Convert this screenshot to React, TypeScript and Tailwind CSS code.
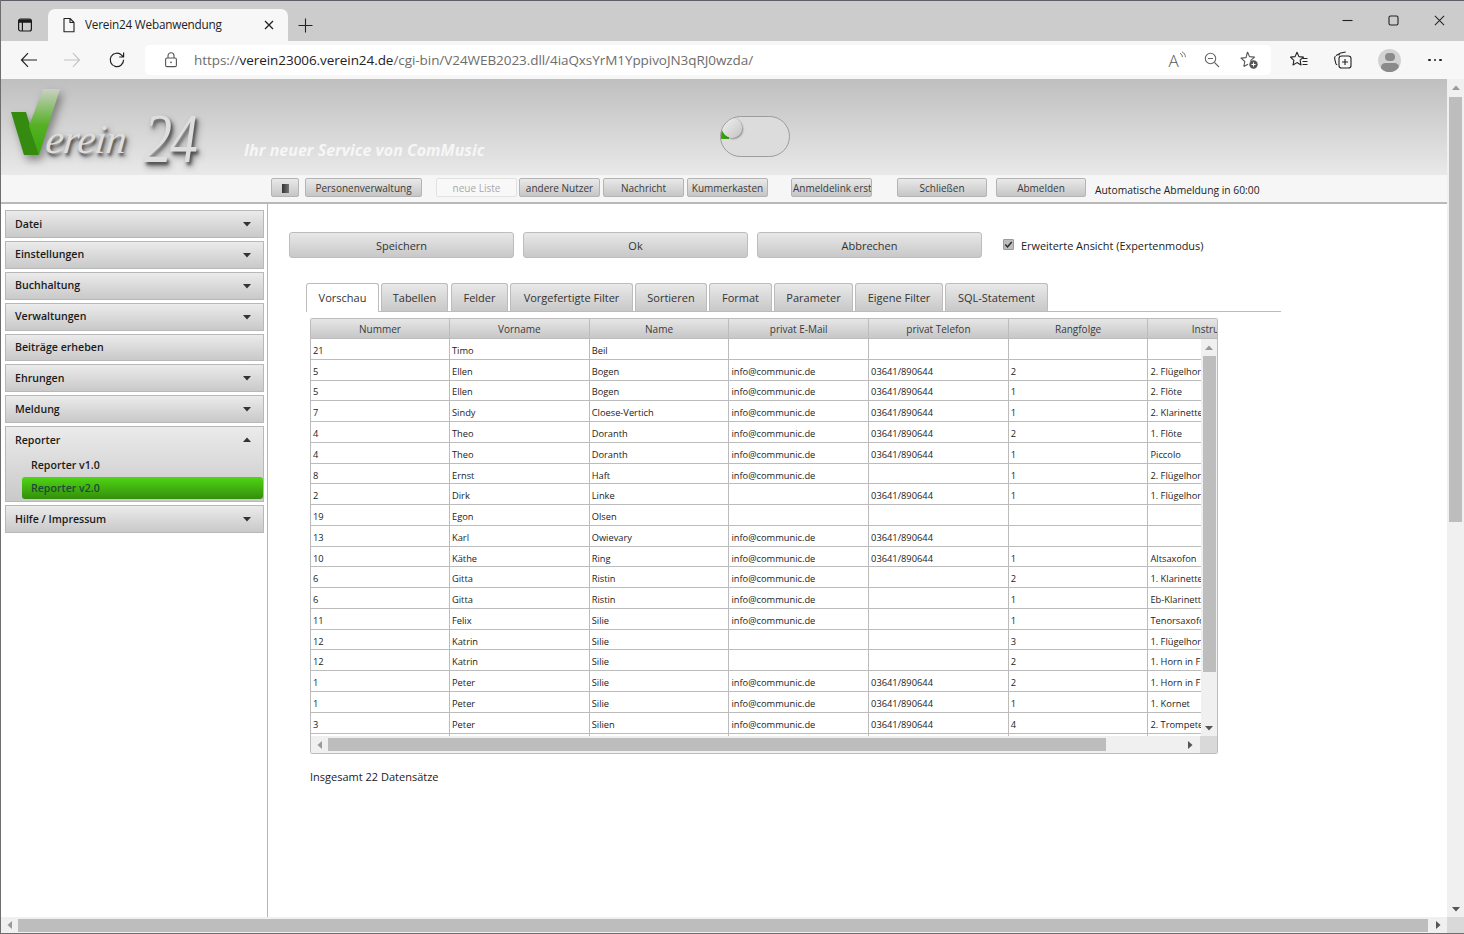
import React from "react";

const info = "info@communic.de";
const tel = "03641/890644";
const rows: string[][] = [
  ["21", "Timo", "Beil", "", "", "", ""],
  ["5", "Ellen", "Bogen", info, tel, "2", "2. Flügelhorn"],
  ["5", "Ellen", "Bogen", info, tel, "1", "2. Flöte"],
  ["7", "Sindy", "Cloese-Vertich", info, tel, "1", "2. Klarinette"],
  ["4", "Theo", "Doranth", info, tel, "2", "1. Flöte"],
  ["4", "Theo", "Doranth", info, tel, "1", "Piccolo"],
  ["8", "Ernst", "Haft", info, "", "1", "2. Flügelhorn"],
  ["2", "Dirk", "Linke", "", tel, "1", "1. Flügelhorn"],
  ["19", "Egon", "Olsen", "", "", "", ""],
  ["13", "Karl", "Owievary", info, tel, "", ""],
  ["10", "Käthe", "Ring", info, tel, "1", "Altsaxofon"],
  ["6", "Gitta", "Ristin", info, "", "2", "1. Klarinette"],
  ["6", "Gitta", "Ristin", info, "", "1", "Eb-Klarinette"],
  ["11", "Felix", "Silie", info, "", "1", "Tenorsaxofon"],
  ["12", "Katrin", "Silie", "", "", "3", "1. Flügelhorn"],
  ["12", "Katrin", "Silie", "", "", "2", "1. Horn in F"],
  ["1", "Peter", "Silie", info, tel, "2", "1. Horn in F"],
  ["1", "Peter", "Silie", info, tel, "1", "1. Kornet"],
  ["3", "Peter", "Silien", info, tel, "4", "2. Trompete"],
  ["", "", "", "", "", "", ""],
];
const heads = ["Nummer", "Vorname", "Name", "privat E-Mail", "privat Telefon", "Rangfolge", "Instrument"];

const Tri = ({ dir, color = "#555", size = 8 }: { dir: "up" | "down" | "left" | "right"; color?: string; size?: number }) => {
  const pts = { up: "4,1.5 8,6 0,6", down: "0,2 8,2 4,6.5", left: "6,0 6,8 1.5,4", right: "2,0 2,8 6.5,4" }[dir];
  return (
    <svg width={size} height={size} viewBox="0 0 8 8" className="block shrink-0">
      <polygon points={pts} fill={color} />
    </svg>
  );
};

const btn = "flex items-center justify-center h-[19px] pt-[1px] rounded-[2px] border border-[#b4b4b4] bg-gradient-to-b from-[#e9e9e9] to-[#c6c6c6] text-[10px] text-[#3a3a3a] overflow-hidden whitespace-nowrap shrink-0";
const big = "flex items-center justify-center w-[225px] h-[26px] pt-[2px] rounded-[3px] border border-[#bdbdbd] bg-gradient-to-b from-[#e8e8e8] to-[#c8c8c8] text-[11px] text-[#333] shrink-0";

const Side = ({ label, arrow = true }: { label: string; arrow?: boolean }) => (
  <div className="flex items-center justify-between h-[27.9px] pl-[9px] pr-[12px] border border-[#b8b8b8] bg-gradient-to-b from-[#ebebeb] to-[#c9c9c9] text-[#1a1a1a] text-[10.6px] font-semibold shrink-0">
    <span className="pt-[1px]">{label}</span>
    {arrow && <Tri dir="down" color="#333" />}
  </div>
);

const tabs: [string, number, number][] = [
  ["Tabellen", 67, 2],
  ["Felder", 57, 3],
  ["Vorgefertigte Filter", 123, 2],
  ["Sortieren", 72, 2],
  ["Format", 63, 2],
  ["Parameter", 79, 2],
  ["Eigene Filter", 88, 2],
  ["SQL-Statement", 103, 2],
];

export default function App() {
  return (
    <div className="w-[1464px] h-[934px] flex flex-col overflow-hidden bg-white font-['Open_Sans',sans-serif] border-l border-b border-[#6e6e6e]">
      {/* Browser tab strip */}
      <div className="h-[41px] shrink-0 flex items-end bg-[#cccccc] border-t border-[#5c6066]">
        <div className="w-[47px] h-[31px] flex items-center justify-center mb-[1px]">
          <svg width="16" height="16" viewBox="0 0 16 16" fill="none" stroke="#1a1a1a" strokeWidth="1.2">
            <rect x="1.6" y="2" width="12.8" height="12" rx="2" />
            <path d="M1.6 5.2h12.8M5.4 5.2V14" />
            <rect x="2" y="2.4" width="12" height="2.6" fill="#1a1a1a" stroke="none" />
          </svg>
        </div>
        <div className="w-[240px] h-[32px] flex items-center rounded-t-[7px] bg-[#f7f7f7] pl-[13px] pr-[14px]">
          <svg width="16" height="16" viewBox="0 0 16 16" fill="none" stroke="#222" strokeWidth="1.1" className="shrink-0">
            <path d="M3 1.5h6l4 4v9.2H3zM9 1.5v4h4" strokeLinejoin="round" />
          </svg>
          <span className="ml-[8px] text-[11.75px] text-[#222] whitespace-nowrap tracking-[-0.2px]">Verein24 Webanwendung</span>
          <svg width="10" height="10" viewBox="0 0 10 10" stroke="#222" strokeWidth="1.3" className="ml-auto shrink-0">
            <path d="M1 1l8 8M9 1l-8 8" />
          </svg>
        </div>
        <div className="w-[34px] h-[32px] flex items-center justify-center">
          <svg width="15" height="15" viewBox="0 0 15 15" stroke="#222" strokeWidth="1.1"><path d="M7.5 0.5v14M0.5 7.5h14" /></svg>
        </div>
        <div className="flex-1" />
        <div className="flex items-center h-[40px] pb-[2px] pr-[19px]">
          <svg width="11" height="11" viewBox="0 0 11 11" stroke="#222" strokeWidth="1.1"><path d="M0.5 5.5h10" /></svg>
          <svg width="11" height="11" viewBox="0 0 11 11" fill="none" stroke="#222" strokeWidth="1.1" className="ml-[35px]"><rect x="1" y="1" width="9" height="9" rx="1.5" /></svg>
          <svg width="11" height="11" viewBox="0 0 12 12" stroke="#222" strokeWidth="1.1" className="ml-[35px]"><path d="M1 1l10 10M11 1L1 11" /></svg>
        </div>
      </div>

      {/* Browser toolbar */}
      <div className="h-[38px] shrink-0 flex items-center bg-[#f7f7f7]">
        <div className="w-[144px] flex items-center shrink-0">
          <svg width="18" height="18" viewBox="0 0 18 18" fill="none" stroke="#222" strokeWidth="1.2" className="ml-[19px]"><path d="M17 9H1.5M8 2.2L1.5 9 8 15.8" /></svg>
          <svg width="18" height="18" viewBox="0 0 18 18" fill="none" stroke="#c4c4c4" strokeWidth="1.2" className="ml-[25px]"><path d="M1 9h15.5M10 2.2L16.5 9 10 15.8" /></svg>
          <svg width="18" height="18" viewBox="0 0 18 18" fill="none" stroke="#222" strokeWidth="1.2" className="ml-[27px]"><path d="M15.6 8.8a6.7 6.7 0 1 1-1.9-4.6L15.6 6M15.6 1.6V6h-4.4" /></svg>
        </div>
        <div className="w-[1126px] h-[30px] flex items-center rounded-[5px] bg-white shrink-0">
          <svg width="16" height="16" viewBox="0 0 16 16" fill="none" stroke="#555" strokeWidth="1.1" className="ml-[18px] shrink-0">
            <rect x="2.6" y="6" width="10.8" height="8.6" rx="1.4" />
            <path d="M5 6V3.8a3 3 0 0 1 6 0V6" />
            <circle cx="8" cy="10.3" r="0.9" fill="#555" stroke="none" />
          </svg>
          <span className="ml-[15px] text-[13.5px] whitespace-nowrap text-[#6d6d6d] tracking-[-0.06px]">
            https://<span className="text-[#222]">verein23006.verein24.de</span>/cgi-bin/V24WEB2023.dll/4iaQxsYrM1YppivoJN3qRJ0wzda/
          </span>
          <div className="ml-auto flex items-center pr-[12px] gap-[17px]">
            <div className="relative w-[18px] h-[18px] flex items-center justify-center">
              <span className="text-[17px] leading-none text-[#555] font-light -ml-[7px]">A</span>
              <svg width="8" height="9" viewBox="0 0 8 9" fill="none" stroke="#666" strokeWidth="0.9" className="absolute right-[-1px] top-[0px]"><path d="M1 2.4c1.6.6 2.4 2 2.4 3.8M3 .8c2.2 1 3.4 3 3.4 5.4" /></svg>
            </div>
            <svg width="18" height="18" viewBox="0 0 18 18" fill="none" stroke="#666" strokeWidth="1.1"><circle cx="7.5" cy="7.5" r="5.2" /><path d="M11.5 11.5L16 16M5 7.5h5" /></svg>
            <svg width="20" height="20" viewBox="0 0 20 20" fill="none" stroke="#555" strokeWidth="1.1" className="ml-[1px]">
              <path d="M8.5 2l2 4.6 5 .5-3.7 3.3 1 3.3M4.8 16.5l1-5-3.8-3.4 5-.5L8.5 2M4.8 16.5l4.2-2.3" strokeLinejoin="round" />
              <circle cx="14.5" cy="14.5" r="4.2" fill="#555" stroke="none" />
              <path d="M14.5 12.4v4.2M12.4 14.5h4.2" stroke="#fff" strokeWidth="1" />
            </svg>
          </div>
        </div>
        <div className="flex items-center">
          <svg width="20" height="20" viewBox="0 0 20 20" fill="none" stroke="#222" strokeWidth="1.1" className="ml-[18px]">
            <path d="M8 2.2l1.9 4.4 4.6.5-3.4 3.1.9 4.7L8 12.6 4 15l.9-4.7L1.5 7.1l4.6-.5z" strokeLinejoin="round" />
            <path d="M13.5 8.5h5M13.5 11.5h5M13.5 14.5h5" />
          </svg>
          <svg width="20" height="20" viewBox="0 0 20 20" fill="none" stroke="#222" strokeWidth="1.1" className="ml-[24px]">
            <path d="M6 5.5V5c0-1 .7-1.8 1.7-2l5-1" />
            <path d="M3 5.5l3-1.5M2.4 6.2C1.6 7 1.5 8 1.7 9l1.1 4.4c.2 .7 .7 1.2 1.5 1.3" />
            <rect x="6" y="6" width="12" height="12" rx="2.6" />
            <path d="M12 9v6M9 12h6" />
          </svg>
          <div className="ml-[25px] w-[23px] h-[23px] rounded-full bg-[#d2d2d2] overflow-hidden relative flex flex-col items-center pt-[4px]">
            <div className="w-[10px] h-[10px] rounded-full bg-[#8a8a8a]" />
            <div className="w-[18px] h-[10px] rounded-full bg-[#8a8a8a] mt-[2px]" />
          </div>
          <div className="ml-[27px] flex gap-[3px]">
            <span className="w-[2.5px] h-[2.5px] rounded-full bg-[#222]" />
            <span className="w-[2.5px] h-[2.5px] rounded-full bg-[#222]" />
            <span className="w-[2.5px] h-[2.5px] rounded-full bg-[#222]" />
          </div>
        </div>
      </div>

      {/* Page viewport */}
      <div className="flex-1 min-h-0 flex flex-col">
        <div className="flex-1 min-h-0 flex">
          <div className="w-[1446px] shrink-0 flex flex-col min-h-0">
            {/* Header */}
            <div className="h-[96px] shrink-0 flex bg-gradient-to-b from-[#bfbfbf] to-[#e9e9e9] overflow-hidden">
              <div className="relative w-[243px] h-[96px] shrink-0">
                <svg width="70" height="80" viewBox="0 0 70 80" className="absolute left-[8px] top-[7px] drop-shadow-[3px_5px_4px_rgba(60,60,60,0.55)]">
                  <defs>
                    <linearGradient id="arm" x1="0" y1="0" x2="0" y2="1">
                      <stop offset="0" stopColor="#c9d0c4" />
                      <stop offset="0.55" stopColor="#55b024" />
                      <stop offset="1" stopColor="#3aa80c" />
                    </linearGradient>
                  </defs>
                  <polygon points="2,26 17,26 30,69 15,69" fill="#348b10" />
                  <polygon points="34,3 51,3 30,69 20,40" fill="url(#arm)" />
                </svg>
                <span className="absolute left-[45px] top-[30px] font-['Liberation_Serif',serif] italic text-[41px] leading-[60px] text-[#dedede] tracking-[-0.5px] -skew-x-6 [text-shadow:2px_3px_3px_rgba(60,60,60,0.85),3px_4px_6px_rgba(60,60,60,0.5)]">erein</span>
                <span className="absolute left-[143px] top-[15px] origin-top scale-y-125 font-['Liberation_Serif',serif] italic text-[56px] leading-[70px] text-[#dedede] [text-shadow:2px_3px_3px_rgba(60,60,60,0.85),3px_4px_6px_rgba(60,60,60,0.5)] tracking-[-2px]">24</span>
              </div>
              <div className="w-[476px] shrink-0 pt-[60px] text-[16px] leading-[22px] font-bold italic text-[#f6f6f6] whitespace-nowrap">Ihr neuer Service von ComMusic</div>
              <div className="relative w-[70px] h-[41px] mt-[37px] rounded-full border border-[#9c9c9c] bg-[#dcdcdc] overflow-hidden shrink-0">
                <div className="absolute left-0 top-[14px] w-[8px] h-[8px] bg-[#3aa10e]" />
                <div className="absolute left-[1px] top-[1px] w-[20px] h-[20px] rounded-full bg-gradient-to-br from-[#f2f2f2] to-[#c4c4c4] shadow-[1px_1px_2px_rgba(0,0,0,0.4)]" />
              </div>
            </div>

            {/* App toolbar */}
            <div className="h-[29px] shrink-0 flex items-center pb-[2px] bg-[#f6f6f6] border-b-2 border-[#b9b9b9] pl-[270px]">
              <div className={btn + " w-[28px]"}>
                <div className="w-[7px] h-[9px] bg-gradient-to-r from-[#333] to-[#777]" />
              </div>
              <div className={btn + " w-[117px] ml-[6px]"}>Personenverwaltung</div>
              <div className="flex items-center justify-center w-[81px] h-[19px] pt-[1px] ml-[14px] rounded-[2px] border border-[#e2e2e2] bg-[#f8f8f8] text-[10px] text-[#a8a8a8] shrink-0">neue Liste</div>
              <div className={btn + " w-[81px] ml-[2px]"}>andere Nutzer</div>
              <div className={btn + " w-[81px] ml-[3px]"}>Nachricht</div>
              <div className={btn + " w-[81px] ml-[3px]"}>Kummerkasten</div>
              <div className={btn + " w-[81px] ml-[23px] !justify-start pl-[1px]"}>Anmeldelink erstellen</div>
              <div className={btn + " w-[90px] ml-[25px]"}>Schließen</div>
              <div className={btn + " w-[90px] ml-[9px]"}>Abmelden</div>
              <span className="ml-[9px] mt-[7px] text-[10.3px] text-[#222] whitespace-nowrap">Automatische Abmeldung in 60:00</span>
            </div>

            {/* Body */}
            <div className="flex-1 min-h-0 flex">
              <div className="w-[267px] shrink-0 border-r border-[#b4b4b4] flex flex-col gap-[3px] pt-[6px] pl-[4px] pr-[3px]">
                <Side label="Datei" />
                <Side label="Einstellungen" />
                <Side label="Buchhaltung" />
                <Side label="Verwaltungen" />
                <Side label="Beiträge erheben" arrow={false} />
                <Side label="Ehrungen" />
                <Side label="Meldung" />
                <div className="h-[76px] shrink-0 border border-[#b8b8b8] bg-gradient-to-b from-[#ebebeb] to-[#c9c9c9] text-[10.6px] font-semibold">
                  <div className="flex items-center justify-between h-[26px] pl-[9px] pr-[12px] text-[#1a1a1a]">
                    <span className="pt-[1px]">Reporter</span>
                    <Tri dir="up" color="#333" />
                  </div>
                  <div className="h-[24px] flex items-center pl-[25px] pt-[1px] text-[#1a1a1a]">Reporter v1.0</div>
                  <div className="h-[22px] ml-[16px] flex items-center pl-[9px] pt-[1px] rounded-[3px] bg-gradient-to-b from-[#4fd614] to-[#348f0c] text-[#1d4a35]">Reporter v2.0</div>
                </div>
                <Side label="Hilfe / Impressum" />
              </div>

              <div className="flex-1 min-w-0 flex flex-col pt-[28px] pl-[21px]">
                <div className="flex items-center h-[26px] gap-[9px]">
                  <div className={big}>Speichern</div>
                  <div className={big}>Ok</div>
                  <div className={big}>Abbrechen</div>
                  <div className="ml-[12px] mb-[2px] w-[11px] h-[11px] rounded-[1px] bg-[#bdbdbd] border border-[#9a9a9a] flex items-center justify-center shrink-0">
                    <svg width="9" height="9" viewBox="0 0 9 9" fill="none" stroke="#2a2a2a" strokeWidth="1.5"><path d="M1.3 4.6l2.2 2.3 4.2-5" /></svg>
                  </div>
                  <span className="-ml-[2px] pt-[2px] text-[10.9px] text-[#222] whitespace-nowrap">Erweiterte Ansicht (Expertenmodus)</span>
                </div>

                <div className="flex items-end h-[29px] mt-[25px] ml-[17px] w-[975px] border-b border-[#bcbcbc]">
                  <div className="w-[73px] h-[29px] -mb-[1px] flex items-center justify-center rounded-t-[3px] border border-b-0 border-[#bcbcbc] bg-white text-[11px] text-[#333] shrink-0">Vorschau</div>
                  {tabs.map(([t, w, g]) => (
                    <div
                      key={t}
                      style={{ width: w, marginLeft: g }}
                      className="h-[28px] pt-[1px] flex items-center justify-center rounded-t-[3px] border border-b-0 border-[#bcbcbc] bg-gradient-to-b from-[#e9e9e9] to-[#c8c8c8] text-[11px] text-[#333] whitespace-nowrap shrink-0"
                    >
                      {t}
                    </div>
                  ))}
                </div>

                <div className="mt-[6px] ml-[21px] w-[908px] h-[436px] rounded-[2px] border border-[#bcbcbc] flex flex-col overflow-hidden shrink-0">
                  <div className="h-[20px] shrink-0 overflow-hidden flex bg-gradient-to-b from-[#e6e6e6] to-[#c7c7c7] border-b border-[#bcbcbc]">
                    <div className="grid grid-cols-[139px_139.7px_139.7px_139.7px_139.7px_139.7px_139.7px] shrink-0">
                      {heads.map((h) => (
                        <div key={h} className="flex items-center justify-center pt-[2px] border-r border-[#bcbcbc] text-[10px] text-[#3a3a3a] whitespace-nowrap">{h}</div>
                      ))}
                    </div>
                  </div>
                  <div className="flex-1 min-h-0 flex">
                    <div className="w-[890px] shrink-0 overflow-hidden">
                      {rows.map((r, i) => (
                        <div key={i} className="grid grid-cols-[139px_139.7px_139.7px_139.7px_139.7px_139.7px_139.7px] h-[20.78px] border-b border-[#bcbcbc]">
                          {r.map((c, j) => (
                            <div key={j} className="border-r border-[#bcbcbc] pl-[2px] pt-[4px] flex items-center text-[9.3px] text-[#222] whitespace-nowrap overflow-hidden">{c}</div>
                          ))}
                        </div>
                      ))}
                    </div>
                    <div className="flex-1 flex flex-col items-center bg-[#f0f0f0]">
                      <div className="h-[17px] flex items-center justify-center"><Tri dir="up" color="#999" /></div>
                      <div className="w-[13px] h-[316px] bg-[#bdbdbd]" />
                      <div className="flex-1 flex items-end justify-center pb-[4px]"><Tri dir="down" color="#555" /></div>
                    </div>
                  </div>
                  <div className="h-[17px] shrink-0 flex items-center bg-[#f0f0f0]">
                    <div className="w-[17px] flex justify-center"><Tri dir="left" color="#999" /></div>
                    <div className="w-[778px] h-[13px] bg-[#bdbdbd]" />
                    <div className="flex-1 flex justify-end pr-[6px]"><Tri dir="right" color="#555" /></div>
                    <div className="w-[17px] h-[17px] bg-[#d9d9d9]" />
                  </div>
                </div>

                <div className="mt-[15px] ml-[21px] text-[11px] leading-[16px] text-[#222]">Insgesamt 22 Datensätze</div>
              </div>
            </div>
          </div>

          {/* Page vertical scrollbar */}
          <div className="flex-1 flex flex-col items-center bg-[#f0f0f0]">
            <div className="h-[18px] flex items-center justify-center"><Tri dir="up" color="#999" /></div>
            <div className="w-[13px] h-[425px] bg-[#bdbdbd]" />
            <div className="flex-1 flex items-end justify-center pb-[4px]"><Tri dir="down" color="#555" /></div>
          </div>
        </div>

        {/* Page horizontal scrollbar */}
        <div className="h-[16px] shrink-0 flex items-center bg-[#f0f0f0]">
          <div className="w-[17px] flex justify-center"><Tri dir="left" color="#999" /></div>
          <div className="w-[1410px] h-[13px] bg-[#bdbdbd]" />
          <div className="flex-1 flex justify-end pr-[5px]"><Tri dir="right" color="#555" /></div>
          <div className="w-[17px] h-[16px] bg-[#d9d9d9]" />
        </div>
      </div>
    </div>
  );
}
